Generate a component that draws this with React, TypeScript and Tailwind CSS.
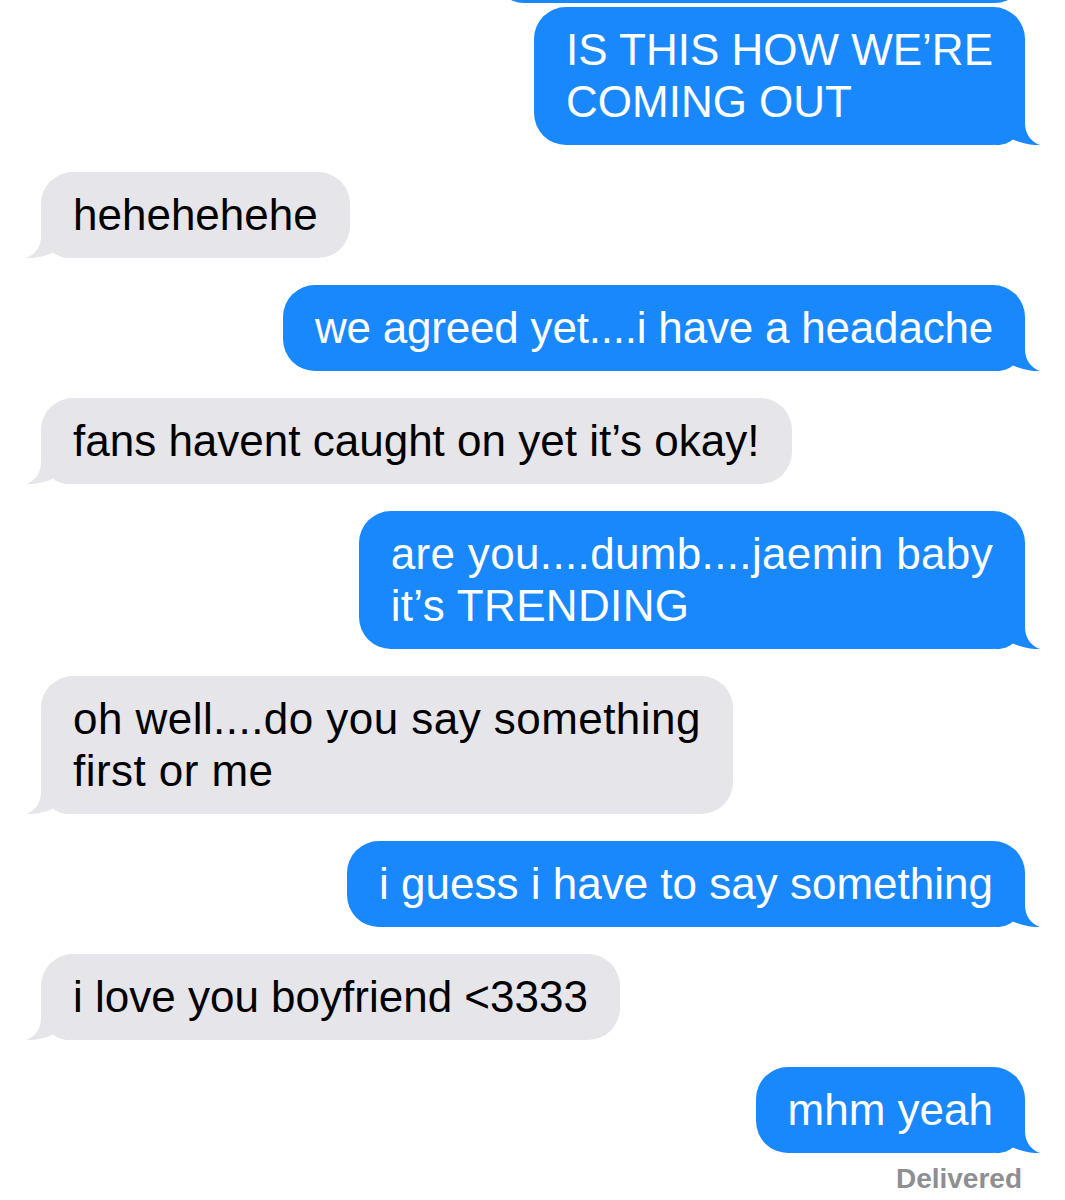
import React from "react";
import clsx from "clsx";

const BLUE = "#1a88fd";
const GRAY = "#e5e5ea";

// tail is drawn for a bubble on the right; left bubbles mirror it
const TAIL =
  "M0 0 H30 V18 C30 29 36 37 45 40 C37 40.5 26 38.5 18 34.5 C14 37.5 9 40 2 40 H0 Z";

function Bubble({
  me,
  className,
  children,
}: {
  me?: boolean;
  className?: string;
  children: React.ReactNode;
}) {
  return (
    <div
      className={clsx(
        "relative rounded-[32px] px-[32px] py-[17px] text-[44px] leading-[52px] whitespace-nowrap",
        me ? "self-end bg-[#1a88fd] text-white" : "self-start bg-[#e5e5ea] text-black",
        className
      )}
    >
      <span className="relative z-10">{children}</span>
      <svg
        width="45"
        height="40"
        viewBox="0 0 45 40"
        className={clsx(
          "absolute bottom-0",
          me ? "right-[-15px]" : "left-[-15px]"
        )}
      >
        {me ? (
          <path d={TAIL} fill={BLUE} />
        ) : (
          <g transform="translate(45 0) scale(-1 1)">
            <path d={TAIL} fill={GRAY} />
          </g>
        )}
      </svg>
    </div>
  );
}

export default function App(): React.ReactElement {
  return (
    <div className="min-h-[1200px] overflow-hidden bg-white font-['Liberation_Sans',Arial,sans-serif]">
      <div className="flex flex-col pl-[41px] pr-[40px]">
        {/* bottom of the previous message, cut off by the screenshot */}
        <div className="-mt-[57px] h-[60px] w-[531px] self-end rounded-[32px] bg-[#1a88fd]" />

        <Bubble me className="mt-[4px]">
          IS THIS HOW WE’RE
          <br />
          COMING OUT
        </Bubble>
        <Bubble className="mt-[27px]">hehehehehe</Bubble>
        <Bubble me className="mt-[27px] tracking-[-0.2px]">
          we agreed yet....i have a headache
        </Bubble>
        <Bubble className="mt-[27px]">fans havent caught on yet it’s okay!</Bubble>
        <Bubble me className="mt-[27px] tracking-[0.35px]">
          are you....dumb....jaemin baby
          <br />
          it’s TRENDING
        </Bubble>
        <Bubble className="mt-[27px] tracking-[0.45px]">
          oh well....do you say something
          <br />
          first or me
        </Bubble>
        <Bubble me className="mt-[27px]">
          i guess i have to say something
        </Bubble>
        <Bubble className="mt-[27px]">i love you boyfriend &lt;3333</Bubble>
        <Bubble me className="mt-[27px]">
          mhm yeah
        </Bubble>

        <div className="mr-[3px] mt-[10px] self-end text-[28px] leading-[32px] font-bold text-[#8e8e93]">
          Delivered
        </div>
      </div>
    </div>
  );
}
